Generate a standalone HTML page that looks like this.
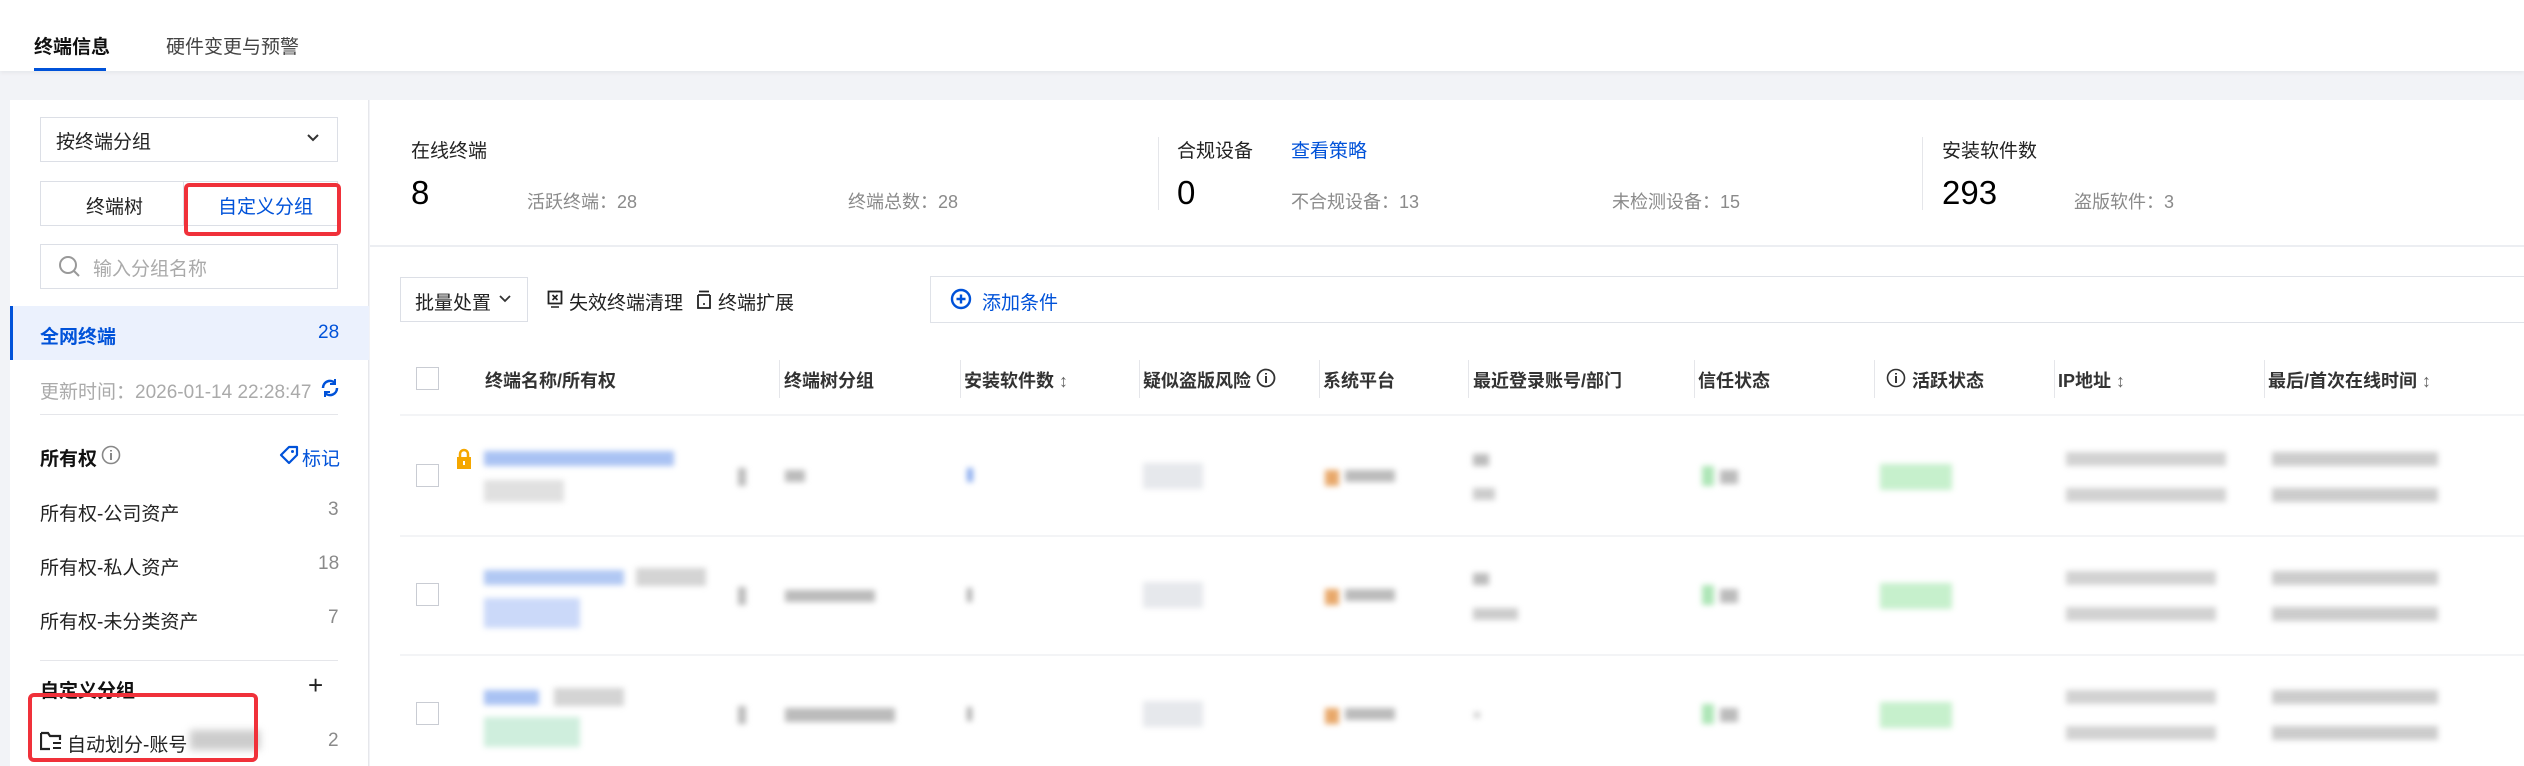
<!DOCTYPE html>
<html><head><meta charset="utf-8"><style>
*{box-sizing:border-box;margin:0;padding:0}
body{width:2524px;height:766px;overflow:hidden;background:#f2f3f7;font-family:"Liberation Sans","Noto Sans CJK SC",sans-serif;font-size:19px;color:#222;position:relative}
.a{position:absolute;white-space:nowrap}
.b{position:absolute;filter:blur(3px)}
.g{color:#8a8a8a}
.blue{color:#0052d9}
.sep{position:absolute;width:1px;background:#e5e6ea}
.hd{position:absolute;top:367px;font-weight:bold;color:#333;font-size:18px}
.cb{position:absolute;width:23px;height:23px;border:1px solid #c9ccd3;background:#fff}
</style></head><body>
<!-- header -->
<div class="a" style="left:0;top:0;width:2524px;height:71px;background:#fff;box-shadow:0 2px 4px rgba(0,0,0,.05)"></div>
<div class="a" style="left:34px;top:32px;font-weight:bold;font-size:19px;color:#111">终端信息</div>
<div class="a" style="left:34px;top:68px;width:72px;height:3px;background:#0052d9"></div>
<div class="a" style="left:166px;top:32px;font-size:19px;color:#444">硬件变更与预警</div>

<!-- sidebar -->
<div class="a" style="left:10px;top:100px;width:359px;height:666px;background:#fff;border-right:1px solid #e6e7eb"></div>
<div class="a" style="left:40px;top:117px;width:298px;height:45px;border:1px solid #dcdfe6"></div>
<div class="a" style="left:56px;top:127px;color:#222">按终端分组</div>
<svg class="a" style="left:306px;top:133px" width="14" height="10"><path d="M2 2l5 5 5-5" stroke="#333" stroke-width="2" fill="none"/></svg>
<div class="a" style="left:40px;top:181px;width:298px;height:45px;border:1px solid #dcdfe6"></div>
<div class="a" style="left:40px;top:181px;width:144px;height:45px;border-right:1px solid #dcdfe6"></div>
<div class="a" style="left:86px;top:192px">终端树</div>
<div class="a" style="left:218px;top:192px;color:#0052d9">自定义分组</div>
<div class="a" style="left:184px;top:183px;width:157px;height:53px;border:4px solid #f0313a;border-radius:5px"></div>
<div class="a" style="left:40px;top:244px;width:298px;height:45px;border:1px solid #dcdfe6"></div>
<svg class="a" style="left:58px;top:255px" width="24" height="24"><circle cx="10" cy="10" r="8" stroke="#999" stroke-width="2" fill="none"/><path d="M16 16l5 5" stroke="#999" stroke-width="2"/></svg>
<div class="a g" style="left:93px;top:254px;color:#aaa">输入分组名称</div>
<div class="a" style="left:10px;top:306px;width:359px;height:54px;background:#ebf1fd"></div>
<div class="a" style="left:10px;top:306px;width:3px;height:54px;background:#0052d9"></div>
<div class="a blue" style="left:40px;top:322px;font-weight:bold">全网终端</div>
<div class="a blue" style="left:318px;top:322px">28</div>
<div class="a" style="left:40px;top:377px;color:#aaa">更新时间：2026-01-14 22:28:47</div>
<svg class="a" style="left:320px;top:378px" width="20" height="20"><path d="M3 10a7 7 0 0 1 12-5M17 10a7 7 0 0 1-12 5" stroke="#0052d9" stroke-width="2.5" fill="none"/><path d="M15 1v5h-5M5 19v-5h5" stroke="#0052d9" stroke-width="2" fill="none"/></svg>
<div class="a" style="left:40px;top:414px;width:298px;height:1px;background:#e5e6ea"></div>
<div class="a" style="left:40px;top:444px;font-weight:bold;color:#111">所有权</div>
<svg class="a" style="left:101px;top:445px" width="20" height="20"><circle cx="10" cy="10" r="8.5" stroke="#888" stroke-width="1.6" fill="none"/><path d="M10 8v7M10 5v1.5" stroke="#888" stroke-width="2"/></svg>
<svg class="a" style="left:278px;top:444px" width="22" height="22"><path d="M3 11L11 3h8v8l-8 8z" stroke="#0052d9" stroke-width="2.2" fill="none" stroke-linejoin="round"/><circle cx="14.5" cy="7.5" r="1.5" fill="#0052d9"/></svg>
<div class="a blue" style="left:302px;top:444px">标记</div>
<div class="a" style="left:40px;top:499px">所有权-公司资产</div><div class="a g" style="left:328px;top:499px">3</div>
<div class="a" style="left:40px;top:553px">所有权-私人资产</div><div class="a g" style="left:318px;top:553px">18</div>
<div class="a" style="left:40px;top:607px">所有权-未分类资产</div><div class="a g" style="left:328px;top:607px">7</div>
<div class="a" style="left:40px;top:660px;width:298px;height:1px;background:#e5e6ea"></div>
<div class="a" style="left:40px;top:676px;font-weight:bold;color:#111">自定义分组</div>
<div class="a" style="left:308px;top:670px;font-size:26px;color:#222">+</div>
<svg class="a" style="left:40px;top:731px" width="22" height="20"><path d="M1 2h7l2 3h10v4M1 2v16h9" stroke="#222" stroke-width="2.2" fill="none"/><path d="M13 12h8M13 17h8" stroke="#222" stroke-width="2"/></svg>
<div class="a" style="left:67px;top:730px">自动划分-账号</div>
<div class="b" style="left:190px;top:730px;width:70px;height:20px;background:#ccc;filter:blur(4px)"></div>
<div class="a g" style="left:328px;top:730px">2</div>
<div class="a" style="left:28px;top:693px;width:230px;height:69px;border:4px solid #f0313a;border-radius:6px"></div>

<!-- main -->
<div class="a" style="left:370px;top:100px;width:2154px;height:666px;background:#fff"></div>
<div class="a" style="left:411px;top:136px">在线终端</div>
<div class="a" style="left:411px;top:174px;font-size:33px;color:#000">8</div>
<div class="a g" style="left:527px;top:188px;font-size:18px">活跃终端：28</div>
<div class="a g" style="left:848px;top:188px;font-size:18px">终端总数：28</div>
<div class="sep" style="left:1158px;top:137px;height:73px"></div>
<div class="a" style="left:1177px;top:136px">合规设备</div>
<div class="a blue" style="left:1291px;top:136px">查看策略</div>
<div class="a" style="left:1177px;top:174px;font-size:33px;color:#000">0</div>
<div class="a g" style="left:1291px;top:188px;font-size:18px">不合规设备：13</div>
<div class="a g" style="left:1612px;top:188px;font-size:18px">未检测设备：15</div>
<div class="sep" style="left:1922px;top:137px;height:73px"></div>
<div class="a" style="left:1942px;top:136px">安装软件数</div>
<div class="a" style="left:1942px;top:174px;font-size:33px;color:#000">293</div>
<div class="a g" style="left:2074px;top:188px;font-size:18px">盗版软件：3</div>
<div class="a" style="left:370px;top:245px;width:2154px;height:2px;background:#eceef2"></div>

<!-- toolbar -->
<div class="a" style="left:400px;top:277px;width:128px;height:45px;border:1px solid #dcdfe6"></div>
<div class="a" style="left:415px;top:288px">批量处置</div>
<svg class="a" style="left:499px;top:295px" width="12" height="9"><path d="M1 1l5 5 5-5" stroke="#333" stroke-width="1.8" fill="none"/></svg>
<svg class="a" style="left:547px;top:290px" width="16" height="20"><rect x="1.5" y="1.5" width="13" height="12" stroke="#222" stroke-width="1.8" fill="none"/><path d="M5.5 5l5 5M10.5 5l-5 5M4 17h8" stroke="#222" stroke-width="1.6"/></svg>
<div class="a" style="left:569px;top:288px">失效终端清理</div>
<svg class="a" style="left:696px;top:290px" width="16" height="20"><path d="M3 1.5h10M2 5h12M2 5v13h12V5" stroke="#222" stroke-width="1.8" fill="none"/><path d="M7 14h2" stroke="#222" stroke-width="1.6"/></svg>
<div class="a" style="left:718px;top:288px">终端扩展</div>
<div class="a" style="left:930px;top:276px;width:1600px;height:47px;border:1px solid #dfe2e8"></div>
<svg class="a" style="left:950px;top:288px" width="22" height="22"><circle cx="11" cy="11" r="9" stroke="#0052d9" stroke-width="2.4" fill="none"/><path d="M11 6.5v9M6.5 11h9" stroke="#0052d9" stroke-width="2.4"/></svg>
<div class="a blue" style="left:982px;top:288px">添加条件</div>

<!-- table header -->
<div class="cb" style="left:416px;top:367px"></div>
<div class="hd" style="left:485px">终端名称/所有权</div>
<div class="sep" style="left:779px;top:360px;height:38px"></div>
<div class="hd" style="left:784px">终端树分组</div>
<div class="sep" style="left:960px;top:360px;height:38px"></div>
<div class="hd" style="left:964px">安装软件数 <span style="font-weight:normal;color:#666">↕</span></div>
<div class="sep" style="left:1139px;top:360px;height:38px"></div>
<div class="hd" style="left:1143px">疑似盗版风险</div>
<svg class="a" style="left:1256px;top:368px" width="20" height="20"><circle cx="10" cy="10" r="8.5" stroke="#333" stroke-width="1.8" fill="none"/><path d="M10 8v7M10 5v1.5" stroke="#333" stroke-width="2"/></svg>
<div class="sep" style="left:1319px;top:360px;height:38px"></div>
<div class="hd" style="left:1323px">系统平台</div>
<div class="sep" style="left:1468px;top:360px;height:38px"></div>
<div class="hd" style="left:1473px">最近登录账号/部门</div>
<div class="sep" style="left:1694px;top:360px;height:38px"></div>
<div class="hd" style="left:1698px">信任状态</div>
<div class="sep" style="left:1874px;top:360px;height:38px"></div>
<svg class="a" style="left:1886px;top:368px" width="20" height="20"><circle cx="10" cy="10" r="8.5" stroke="#333" stroke-width="1.6" fill="none"/><path d="M10 8v7M10 5v1.5" stroke="#333" stroke-width="2"/></svg>
<div class="hd" style="left:1912px">活跃状态</div>
<div class="sep" style="left:2054px;top:360px;height:38px"></div>
<div class="hd" style="left:2058px">IP地址 <span style="font-weight:normal;color:#666">↕</span></div>
<div class="sep" style="left:2264px;top:360px;height:38px"></div>
<div class="hd" style="left:2268px">最后/首次在线时间 <span style="font-weight:normal;color:#666">↕</span></div>
<div class="a" style="left:400px;top:414px;width:2124px;height:2px;background:#f3f4f6"></div>
<div class="a" style="left:400px;top:535px;width:2124px;height:2px;background:#f3f4f6"></div>
<div class="a" style="left:400px;top:654px;width:2124px;height:2px;background:#f3f4f6"></div>

<!-- rows -->
<div class="cb" style="left:416px;top:464px"></div>
<div class="cb" style="left:416px;top:583px"></div>
<div class="cb" style="left:416px;top:702px"></div>
<svg class="a" style="left:456px;top:448px" width="16" height="22"><path d="M4 9V6a4 4 0 0 1 8 0v3" stroke="#f5a700" stroke-width="2.5" fill="none"/><rect x="1" y="9" width="14" height="12" fill="#f5a700"/><rect x="7" y="13" width="2" height="4" fill="#fff"/></svg>

<!-- row1 -->
<div class="b" style="left:484px;top:451px;width:190px;height:15px;background:#a9c2f3"></div>
<div class="b" style="left:484px;top:480px;width:80px;height:22px;background:#e0e0e0"></div>
<div class="b" style="left:738px;top:468px;width:8px;height:18px;background:#bbb"></div>
<div class="b" style="left:785px;top:470px;width:20px;height:12px;background:#bbb"></div>
<div class="b" style="left:967px;top:468px;width:6px;height:14px;background:#86a9ee"></div>
<div class="b" style="left:1143px;top:463px;width:60px;height:26px;background:#e6e8ec"></div>
<div class="b" style="left:1325px;top:470px;width:14px;height:16px;background:#e8a86a"></div>
<div class="b" style="left:1345px;top:470px;width:50px;height:12px;background:#bbb"></div>
<div class="b" style="left:1473px;top:454px;width:16px;height:12px;background:#bbb"></div>
<div class="b" style="left:1473px;top:488px;width:22px;height:12px;background:#ccc"></div>
<div class="b" style="left:1702px;top:466px;width:12px;height:20px;background:#aee6b7"></div>
<div class="b" style="left:1720px;top:470px;width:18px;height:14px;background:#bbb"></div>
<div class="b" style="left:1880px;top:464px;width:72px;height:26px;background:#c6f0cc"></div>
<div class="b" style="left:2066px;top:452px;width:160px;height:14px;background:#d2d2d2"></div>
<div class="b" style="left:2066px;top:488px;width:160px;height:14px;background:#d2d2d2"></div>
<div class="b" style="left:2272px;top:452px;width:166px;height:14px;background:#ccc"></div>
<div class="b" style="left:2272px;top:488px;width:166px;height:14px;background:#ccc"></div>
<!-- row2 -->
<div class="b" style="left:484px;top:570px;width:140px;height:15px;background:#b1c8f3"></div>
<div class="b" style="left:636px;top:568px;width:70px;height:18px;background:#d4d4d4"></div>
<div class="b" style="left:484px;top:598px;width:96px;height:30px;background:#cbd9f9"></div>
<div class="b" style="left:738px;top:587px;width:8px;height:18px;background:#bbb"></div>
<div class="b" style="left:785px;top:590px;width:90px;height:12px;background:#bbb"></div>
<div class="b" style="left:967px;top:588px;width:5px;height:14px;background:#aaa"></div>
<div class="b" style="left:1143px;top:582px;width:60px;height:26px;background:#e6e8ec"></div>
<div class="b" style="left:1325px;top:589px;width:14px;height:16px;background:#e8a86a"></div>
<div class="b" style="left:1345px;top:589px;width:50px;height:12px;background:#bbb"></div>
<div class="b" style="left:1473px;top:573px;width:16px;height:12px;background:#bbb"></div>
<div class="b" style="left:1473px;top:608px;width:45px;height:12px;background:#ccc"></div>
<div class="b" style="left:1702px;top:585px;width:12px;height:20px;background:#aee6b7"></div>
<div class="b" style="left:1720px;top:589px;width:18px;height:14px;background:#bbb"></div>
<div class="b" style="left:1880px;top:583px;width:72px;height:26px;background:#c6f0cc"></div>
<div class="b" style="left:2066px;top:571px;width:150px;height:14px;background:#d2d2d2"></div>
<div class="b" style="left:2066px;top:607px;width:150px;height:14px;background:#d2d2d2"></div>
<div class="b" style="left:2272px;top:571px;width:166px;height:14px;background:#ccc"></div>
<div class="b" style="left:2272px;top:607px;width:166px;height:14px;background:#ccc"></div>
<!-- row3 -->
<div class="b" style="left:484px;top:690px;width:55px;height:15px;background:#a9c2f3"></div>
<div class="b" style="left:554px;top:688px;width:70px;height:18px;background:#d4d4d4"></div>
<div class="b" style="left:484px;top:717px;width:96px;height:30px;background:#cfeedd"></div>
<div class="b" style="left:738px;top:706px;width:8px;height:18px;background:#bbb"></div>
<div class="b" style="left:785px;top:708px;width:110px;height:14px;background:#bbb"></div>
<div class="b" style="left:967px;top:707px;width:5px;height:14px;background:#aaa"></div>
<div class="b" style="left:1143px;top:701px;width:60px;height:26px;background:#e6e8ec"></div>
<div class="b" style="left:1325px;top:708px;width:14px;height:16px;background:#e8a86a"></div>
<div class="b" style="left:1345px;top:708px;width:50px;height:12px;background:#bbb"></div>
<div class="b" style="left:1474px;top:712px;width:6px;height:6px;background:#ccc"></div>
<div class="b" style="left:1702px;top:704px;width:12px;height:20px;background:#aee6b7"></div>
<div class="b" style="left:1720px;top:708px;width:18px;height:14px;background:#bbb"></div>
<div class="b" style="left:1880px;top:702px;width:72px;height:26px;background:#c6f0cc"></div>
<div class="b" style="left:2066px;top:690px;width:150px;height:14px;background:#d2d2d2"></div>
<div class="b" style="left:2066px;top:726px;width:150px;height:14px;background:#d2d2d2"></div>
<div class="b" style="left:2272px;top:690px;width:166px;height:14px;background:#ccc"></div>
<div class="b" style="left:2272px;top:726px;width:166px;height:14px;background:#ccc"></div>
</body></html>
